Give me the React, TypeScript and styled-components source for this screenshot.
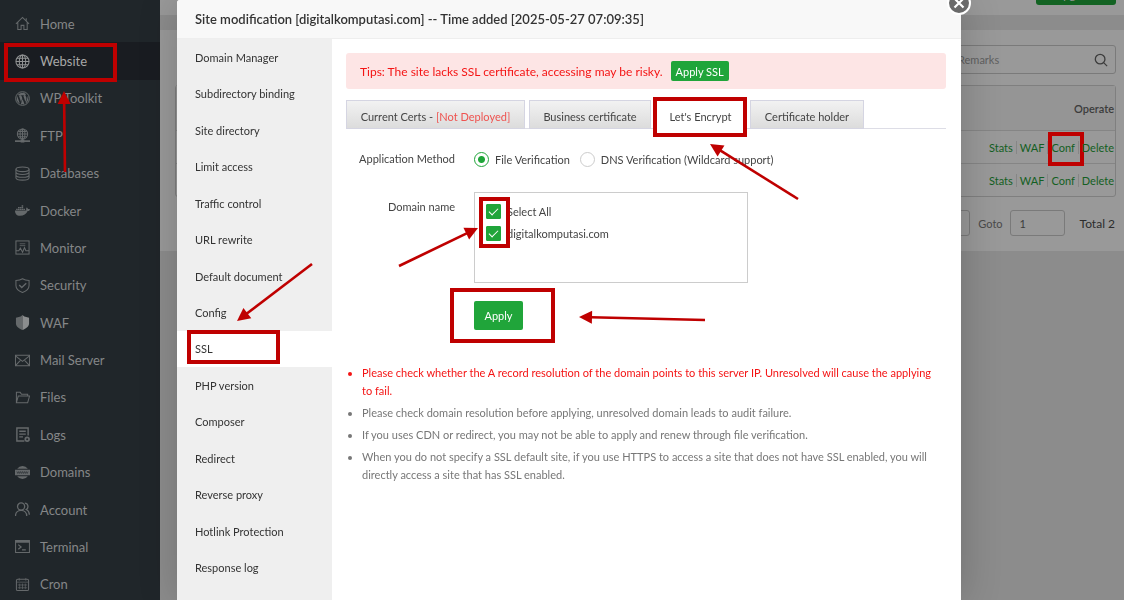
import React from "react";
import styled, { createGlobalStyle, css } from "styled-components";
import { FaDocker, FaWordpress } from "react-icons/fa";

const GREEN = "#20a53a";
const MARK = "#bf0000";

const GlobalStyle = createGlobalStyle`
  * { box-sizing: border-box; }
  body {
    margin: 0;
    background: #8c8c8c;
    font-family: Lato, "Open Sans", sans-serif;
    font-size: 11px;
    color: #444;
    overflow: hidden;
  }
  ul { margin: 0; padding: 0; list-style: none; }
  a { text-decoration: none; color: inherit; }
  button, input { font: inherit; }
`;

const Page = styled.div`
  display: flex;
  height: 100vh;
  overflow: hidden;
`;

/* Main navigation */
const Sidebar = styled.nav`
  position: relative;
  flex: 0 0 160px;
  background: #20262a;
  padding-top: 5px;
`;

const NavList = styled.ul`
  display: grid;
  grid-auto-rows: 1fr;
  height: 598px;
`;

const NavLink = styled.a<{ $active?: boolean }>`
  display: flex;
  align-items: center;
  gap: 10px;
  height: 100%;
  padding-left: 15px;
  font-size: 13px;
  color: ${(p) => (p.$active ? "#a8a8a8" : "#858788")};
  background: ${(p) => (p.$active ? "#191c21" : "transparent")};
  svg {
    flex: none;
    width: 15px;
    height: 15px;
    color: ${(p) => (p.$active ? "#909293" : "#65696b")};
  }
`;

/* Page behind the dialog */
const Content = styled.main`
  flex: 1;
  min-width: 0;
`;

const TopBar = styled.header`
  display: flex;
  justify-content: flex-end;
  align-items: flex-end;
  height: 15px;
  padding: 0 8px 10px 0;
  margin-bottom: 15px;
  background: #999;
`;

const UpgradeButton = styled.button`
  flex: none;
  width: 80px;
  height: 22px;
  padding: 0;
  border: 0;
  border-radius: 3px;
  background: #136323;
  color: #999;
`;

const Panel = styled.section`
  display: flex;
  flex-direction: column;
  align-items: flex-end;
  padding: 15px 8px 15px 15px;
  background: #999;
`;

const SearchBox = styled.label`
  display: flex;
  align-items: center;
  justify-content: flex-end;
  gap: 8px;
  width: 260px;
  height: 29px;
  padding-right: 7px;
  margin-bottom: 11px;
  border: 1px solid #7a7a7a;
  border-radius: 3px;
  color: #3c3c3c;
  input {
    width: 128px;
    border: 0;
    padding: 0;
    background: none;
    outline: 0;
  }
  input::placeholder { color: #606060; }
`;

const SiteTable = styled.table`
  width: 100%;
  border: 1px solid #7f7f7f;
  border-radius: 3px;
  border-collapse: separate;
  border-spacing: 0;
  th, td { padding: 0 1px 0 0; text-align: right; }
  th {
    height: 44px;
    font-size: 11px;
    font-weight: 600;
    color: #3c3c3c;
    background: #959595;
  }
  td { height: 33px; border-top: 1px solid #858585; }
`;

const Actions = styled.div`
  display: flex;
  justify-content: flex-end;
  color: #135f22;
  a { position: relative; }
  a + a {
    margin-left: 3px;
    padding-left: 3px;
    border-left: 1px solid #868686;
  }
`;

const Pager = styled.div`
  display: flex;
  align-items: center;
  margin-top: 13px;
  color: #4a4a4a;
  input {
    height: 26px;
    border: 1px solid #7a7a7a;
    border-radius: 3px;
    background: none;
    color: #3c3c3c;
    padding: 0 9px;
  }
`;

const PageSize = styled.input`
  width: 60px;
  margin-right: 8px;
`;

const GotoLabel = styled.label`
  display: flex;
  align-items: center;
  gap: 7px;
  input { width: 55px; }
`;

const Total = styled.span`
  margin-left: 15px;
  font-size: 12px;
  padding-right: 1px;
  color: #2c2c2c;
`;

/* Dialog */
const Overlay = styled.div`
  position: fixed;
  inset: 0;
  display: flex;
  padding: 0 163px 0 177px;
  pointer-events: none;
`;

const Dialog = styled.section`
  position: relative;
  flex: 1;
  display: flex;
  flex-direction: column;
  min-height: 100%;
  background: #fff;
  border-radius: 3px 3px 0 0;
  box-shadow: 1px 1px 40px rgba(0, 0, 0, 0.2);
  pointer-events: auto;
`;

const DialogHeader = styled.h1`
  flex: none;
  height: 39px;
  margin: 0;
  padding-left: 18px;
  line-height: 38px;
  font-size: 13px;
  font-weight: 600;
  color: #333;
  background: #f8f8f8;
  border-bottom: 1px solid #eee;
  border-radius: 3px 3px 0 0;
`;

const CloseButton = styled.button`
  position: absolute;
  top: -9px;
  right: -10px;
  display: grid;
  place-items: center;
  width: 24px;
  height: 24px;
  padding: 0;
  border: 2px solid #fff;
  border-radius: 50%;
  background: #6a6a6a;
  color: #fff;
`;

const DialogBody = styled.div`
  flex: 1;
  display: flex;
`;

const Menu = styled.nav`
  flex: 0 0 155px;
  background: #efefef;
`;

const MenuList = styled.ul`
  display: grid;
  grid-auto-rows: 1fr;
  height: 547px;
`;

const MenuLink = styled.a<{ $active?: boolean }>`
  display: flex;
  align-items: center;
  height: 100%;
  padding-left: 18px;
  color: #333;
  background: ${(p) => (p.$active ? "#fff" : "transparent")};
`;

const Pane = styled.div`
  flex: 1;
  min-width: 0;
  padding: 14px 15px 0 14px;
`;

const Tips = styled.div`
  display: flex;
  align-items: center;
  gap: 8px;
  height: 36px;
  margin-bottom: 11px;
  padding-left: 14px;
  border-radius: 3px;
  background: #fde5e5;
  color: #f41414;
  font-size: 12px;
`;

const greenButton = css`
  border: 0;
  border-radius: 2px;
  background: ${GREEN};
  color: #fff;
  white-space: nowrap;
`;

const ApplySslButton = styled.button`
  ${greenButton}
  height: 20px;
  padding: 0 5px;
  font-size: 11px;
`;

const Tabs = styled.div`
  display: flex;
  height: 29px;
  border-bottom: 1px solid #dddde6;
`;

const Tab = styled.button<{ $active?: boolean; $width: number }>`
  flex: 0 1 ${(p) => p.$width}px;
  height: 29px;
  margin-right: 4px;
  padding: 3px 0 0;
  border: 1px solid #d5d5e2;
  background: linear-gradient(#f2f2f2, #dcdcdc);
  color: #444;
  white-space: nowrap;
  em { font-style: normal; color: #ef5350; }
  ${(p) =>
    p.$active &&
    css`
      background: #fff;
      border-color: #fff;
    `}
`;

const Form = styled.form`
  display: grid;
  grid-template-columns: 109px minmax(0, 1fr);
  column-gap: 19px;
  padding-top: 20px;
`;

const FormLabel = styled.span`
  text-align: right;
  line-height: 20px;
`;

const Radios = styled.div`
  display: flex;
  gap: 10px;
  height: 20px;
  margin-bottom: 23px;
`;

const Choice = styled.label`
  display: flex;
  align-items: center;
  gap: 6px;
  white-space: nowrap;
`;

const Radio = styled.input.attrs({ type: "radio" })`
  appearance: none;
  width: 15px;
  height: 15px;
  margin: 0;
  border: 1px solid #ccc;
  border-radius: 50%;
  &:checked {
    border-color: ${GREEN};
    background: radial-gradient(circle, ${GREEN} 0 3px, #fff 4px);
  }
`;

const DomainBox = styled.div`
  display: flex;
  flex-direction: column;
  gap: 7px;
  width: 274px;
  max-width: 100%;
  height: 91px;
  padding: 11px;
  margin-bottom: 18px;
  border: 1px solid #ccc;
  ${Choice} { height: 15px; }
`;

const DomainLabel = styled(FormLabel)`
  padding-top: 5px;
`;

const Check = styled.input.attrs({ type: "checkbox" })`
  appearance: none;
  display: grid;
  place-items: center;
  width: 15px;
  height: 15px;
  margin: 0;
  border: 1px solid #ccc;
  border-radius: 1px;
  &:checked {
    border-color: ${GREEN};
    background: ${GREEN};
  }
  &:checked::after {
    content: "";
    width: 8px;
    height: 4px;
    margin-bottom: 3px;
    border: solid #fff;
    border-width: 0 0 1px 1px;
    transform: rotate(-45deg);
  }
`;

const ApplyButton = styled.button`
  ${greenButton}
  width: 49px;
  height: 29px;
  padding: 0;
  grid-column: 2;
`;

const Notes = styled.ul`
  padding: 34px 8px 0 16px;
  list-style: disc;
  color: #777;
  line-height: 18px;
  li { margin-bottom: 4px; }
  li:first-child { color: #f41414; }
`;

/* Tutorial marks over the screen */
const Frame = styled.div<{ $x: number; $y: number; $w: number; $h: number }>`
  position: absolute;
  left: ${(p) => p.$x}px;
  top: ${(p) => p.$y}px;
  width: ${(p) => p.$w}px;
  height: ${(p) => p.$h}px;
  border: 4px solid ${MARK};
  pointer-events: none;
`;

const ArrowSvg = styled.svg<{ $x: number; $y: number }>`
  position: absolute;
  left: ${(p) => p.$x}px;
  top: ${(p) => p.$y}px;
  width: 1px;
  height: 1px;
  overflow: visible;
  pointer-events: none;
`;

type ArrowProps = { x: number; y: number; dx: number; dy: number };

/* The tip is at (x, y); the tail is dx, dy away from it. */
function Arrow({ x, y, dx, dy }: ArrowProps) {
  const angle = (Math.atan2(dy, dx) * 180) / Math.PI;
  const length = Math.hypot(dx, dy);
  return (
    <ArrowSvg $x={x} $y={y} aria-hidden="true">
      <g transform={`rotate(${angle})`} fill={MARK} stroke="none">
        <path d="M0 0L13-6.5V6.5z" />
        <path d={`M12-1.3H${length}V1.3H12z`} />
      </g>
    </ArrowSvg>
  );
}

const Line = ({ children }: { children: React.ReactNode }) => (
  <svg viewBox="0 0 16 16" fill="none" stroke="currentColor" strokeWidth="1.1" aria-hidden="true">
    {children}
  </svg>
);

const navItems: { label: string; icon: React.ReactNode }[] = [
  { label: "Home", icon: <Line><path d="M1 8.5L8 1.5l7 7M3 7v7.5h3.5V10h3v4.5H13V7M12 5V2.5" /></Line> },
  {
    label: "Website",
    icon: <Line><circle cx="8" cy="8" r="7" /><ellipse cx="8" cy="8" rx="3.4" ry="7" /><path d="M8 1v14M1 8h14M2 4.5h12M2 11.5h12" /></Line>,
  },
  {
    label: "WP Toolkit",
    icon: <Line><FaWordpress x="0.5" y="0.5" /><circle cx="8" cy="8" r="7.4" strokeWidth=".9" /></Line>,
  },
  {
    label: "FTP",
    icon: <Line><circle cx="8" cy="6.5" r="5.5" /><ellipse cx="8" cy="6.5" rx="2.6" ry="5.5" /><path d="M2.5 6.5h11M3.5 3.7h9M3.5 9.3h9M8 1v13" /><path d="M0 14h16" strokeWidth="1.8" /><path d="M6 14h4" strokeWidth="3" /></Line>,
  },
  {
    label: "Databases",
    icon: <Line><ellipse cx="8" cy="3.5" rx="7" ry="2.5" /><path d="M1 3.5v9c0 3.4 14 3.4 14 0v-9M1 6.5c0 3.3 14 3.3 14 0M1 9.5c0 3.3 14 3.3 14 0" /></Line>,
  },
  { label: "Docker", icon: <FaDocker /> },
  {
    label: "Monitor",
    icon: <Line><rect x="1" y="1" width="14" height="14" /><path d="M1 11.5h3l1.7-3 2.4 4.5 2-5 1.5 3.5H15" /><path d="M5 4h6M5 6h6" strokeWidth=".8" /></Line>,
  },
  {
    label: "Security",
    icon: <Line><path d="M8 .8c2 1.3 4.500 1.800 7 1.800V8c0 3.500-3 6-7 7.500C4 14 1 11.500 1 8V2.600C3.500 2.600 6 2.100 8 .8z" /><path d="M4.500 7.500L7.200 10.200 12 5.500" strokeWidth="1.400" /></Line>,
  },
  {
    label: "WAF",
    icon: (
      <svg viewBox="0 0 16 16" fill="currentColor" aria-hidden="true">
        <path d="M8 0L6 1.500 1 3v6c0 3 3 5.500 7 7z" />
        <path d="M8 0l2 1.500L15 3v6c0 3-3 5.500-7 7z" fill="#8b8d8e" />
      </svg>
    ),
  },
  { label: "Mail Server", icon: <Line><path d="M.5 2.500h15v11H.5zM.5 3L8 9l7.500-6M.5 13.500L6 7.500M15.500 13.500L10 7.500" /></Line> },
  { label: "Files", icon: <Line><path d="M1.500 13.500V2.500h4l1.500 2h6.500v2M1.500 13.500l2-7H15.500l-2 7z" /></Line> },
  {
    label: "Logs",
    icon: <Line><path d="M14 9V1H2v14h8" strokeWidth="1.500" /><path d="M4.500 4.500h7M4.500 7.500h7M4.500 10.500h4" strokeWidth="1.400" /><circle cx="13" cy="13" r="2" strokeWidth="1.800" /></Line>,
  },
  {
    label: "Domains",
    icon: (
      <svg viewBox="0 0 16 16" aria-hidden="true">
        <path fill="currentColor" d="M2.300 4a7 7 0 0 1 11.400 0zM2.300 12a7 7 0 0 0 11.400 0zM0 5h16v6H0z" />
        <path fill="none" stroke="#2e3337" d="M2 7l1 2 1-2 1 2 1-2 1 2 1-2 1 2 1-2 1 2 1-2 1 2 1-2" strokeWidth=".8" />
      </svg>
    ),
  },
  {
    label: "Account",
    icon: <Line><circle cx="6.500" cy="4.800" r="3.800" strokeWidth="1.400" /><path d="M.5 15c0-3.500 2.500-6 6-6s6 2.500 6 6M10.500 1.200c3.500 0 4.500 5 1.500 6.800 2 1 3.300 3 3.300 5.500" strokeWidth="1.400" /></Line>,
  },
  { label: "Terminal", icon: <Line><path d="M.6 1.600h14.800v12.800H.6z" /><path d="M.6 3h14.800" strokeWidth="2" /><path d="M3.500 6l3 2.500-3 2.500M7.500 11.500h4" strokeWidth="1.300" /></Line> },
  {
    label: "Cron",
    icon: <Line><rect x="1.500" y="2.500" width="13" height="12" rx="1.500" /><path d="M1.500 5.500h13M4.500 1v3M11.500 1v3M5 7v6M8 7v6M11 7v6M3 8.500h10M3 11.500h10" strokeWidth=".7" /></Line>,
  },
];

const menuItems = [
  "Domain Manager", "Subdirectory binding", "Site directory", "Limit access", "Traffic control",
  "URL rewrite", "Default document", "Config", "SSL", "PHP version", "Composer", "Redirect",
  "Reverse proxy", "Hotlink Protection", "Response log",
];

const SiteActions = ({ marked }: { marked?: boolean }) => (
  <Actions>
    <a href="#stats">Stats</a>
    <a href="#waf">WAF</a>
    <a href="#conf">
      Conf
      {marked && <Frame $x={0} $y={-9} $w={36} $h={34} />}
    </a>
    <a href="#delete">Delete</a>
  </Actions>
);

export default function App() {
  return (
    <>
      <GlobalStyle />
      <Page>
        <Sidebar>
          <NavList>
            {navItems.map(({ label, icon }) => (
              <li key={label}>
                <NavLink href="#" $active={label === "Website"}>
                  {icon}
                  {label}
                </NavLink>
              </li>
            ))}
          </NavList>
          <Frame $x={4} $y={43} $w={113} $h={39} />
          <Arrow x={64} y={91} dx={1} dy={81} />
        </Sidebar>

        <Content>
          <TopBar>
            <UpgradeButton>Upgrade</UpgradeButton>
          </TopBar>
          <Panel>
            <SearchBox>
              <input aria-label="Search sites" placeholder="Remarks" />
              <svg width="14" height="14" viewBox="0 0 16 16" fill="none" stroke="currentColor" strokeWidth="1.500" aria-hidden="true">
                <circle cx="7" cy="7" r="5.500" />
                <path d="M11 11l4 4" />
              </svg>
            </SearchBox>
            <SiteTable>
              <thead>
                <tr><th>Operate</th></tr>
              </thead>
              <tbody>
                <tr><td><SiteActions marked /></td></tr>
                <tr><td><SiteActions /></td></tr>
              </tbody>
            </SiteTable>
            <Pager>
              <PageSize aria-label="Page size" />
              <GotoLabel>
                Goto
                <input defaultValue="1" />
              </GotoLabel>
              <Total>Total 2</Total>
            </Pager>
          </Panel>
        </Content>
      </Page>

      <Overlay>
        <Dialog role="dialog" aria-labelledby="dialog-title">
          <DialogHeader id="dialog-title">
            Site modification [digitalkomputasi.com] -- Time added [2025-05-27 07:09:35]
          </DialogHeader>
          <DialogBody>
            <Menu>
              <MenuList>
                {menuItems.map((item) => (
                  <li key={item}>
                    <MenuLink href="#" $active={item === "SSL"}>{item}</MenuLink>
                  </li>
                ))}
              </MenuList>
            </Menu>
            <Pane>
              <Tips>
                Tips: The site lacks SSL certificate, accessing may be risky.
                <ApplySslButton>Apply SSL</ApplySslButton>
              </Tips>
              <Tabs role="tablist">
                <Tab role="tab" $width={179}>Current Certs - <em>[Not Deployed]</em></Tab>
                <Tab role="tab" $width={122}>Business certificate</Tab>
                <Tab role="tab" $width={91} $active aria-selected="true">Let's Encrypt</Tab>
                <Tab role="tab" $width={114}>Certificate holder</Tab>
              </Tabs>
              <Form onSubmit={(e) => e.preventDefault()}>
                <FormLabel>Application Method</FormLabel>
                <Radios>
                  <Choice><Radio name="method" defaultChecked />File Verification</Choice>
                  <Choice><Radio name="method" />DNS Verification (Wildcard support)</Choice>
                </Radios>
                <DomainLabel>Domain name</DomainLabel>
                <DomainBox>
                  <Choice><Check defaultChecked />Select All</Choice>
                  <Choice><Check defaultChecked />digitalkomputasi.com</Choice>
                </DomainBox>
                <ApplyButton>Apply</ApplyButton>
              </Form>
              <Notes>
                <li>Please check whether the A record resolution of the domain points to this server IP. Unresolved will cause the applying to fail.</li>
                <li>Please check domain resolution before applying, unresolved domain leads to audit failure.</li>
                <li>If you uses CDN or redirect, you may not be able to apply and renew through file verification.</li>
                <li>When you do not specify a SSL default site, if you use HTTPS to access a site that does not have SSL enabled, you will directly access a site that has SSL enabled.</li>
              </Notes>
            </Pane>
          </DialogBody>
          <CloseButton aria-label="Close">
            <svg width="12" height="12" viewBox="0 0 12 12" stroke="currentColor" strokeWidth="2.200" aria-hidden="true">
              <path d="M1.500 1.500l9 9M10.500 1.500l-9 9" />
            </svg>
          </CloseButton>

          <Frame $x={10} $y={330} $w={93} $h={34} />
          <Frame $x={476} $y={97} $w={94} $h={40} />
          <Frame $x={302} $y={197} $w={31} $h={51} />
          <Frame $x={273} $y={288} $w={105} $h={55} />
          <Arrow x={60} y={321} dx={75} dy={-57} />
          <Arrow x={301} y={228} dx={-79} dy={38} />
          <Arrow x={402} y={317} dx={126} dy={3} />
          <Arrow x={533} y={144} dx={88} dy={55} />
        </Dialog>
      </Overlay>
    </>
  );
}
